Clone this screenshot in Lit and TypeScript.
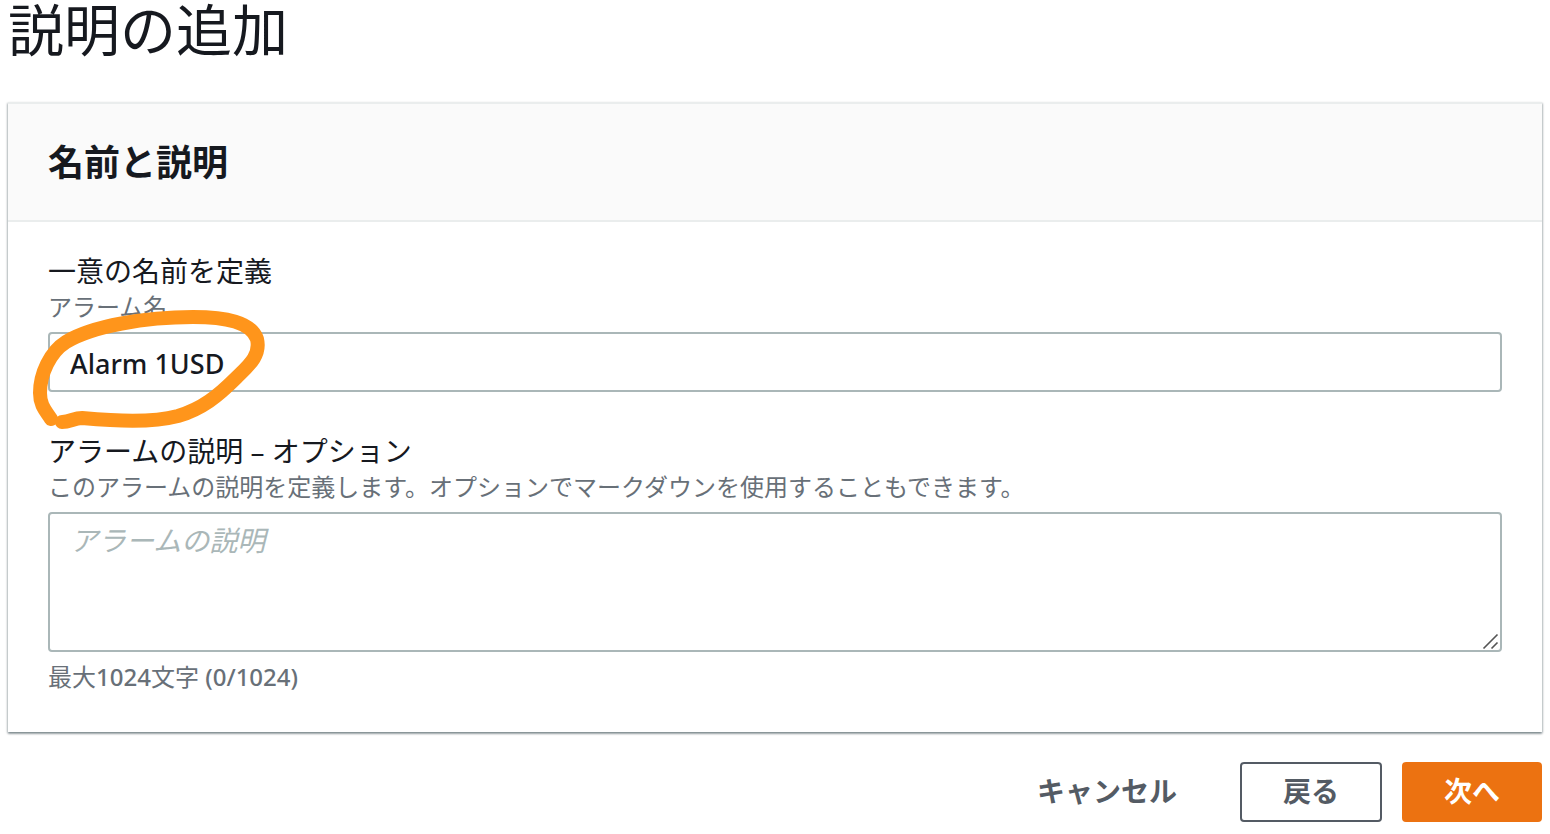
import { LitElement, html, css } from "lit";
import { customElement, state } from "lit/decorators.js";

const MAX_LENGTH = 1024;

@customElement("app-root")
export class AppRoot extends LitElement {
  static styles = css`
    :host {
      display: block;
      color: #16191f;
      font-family: "Open Sans", "Noto Sans CJK JP", sans-serif;
      font-size: 28px;
      line-height: 36px;
    }
    * {
      box-sizing: border-box;
    }
    .page {
      padding: 0 8px 12px;
    }
    .title {
      margin: 0 0 39px;
      font-family: "Liberation Sans", "Noto Sans CJK JP", sans-serif;
      font-size: 56px;
      font-weight: 400;
      line-height: 63px;
    }
    .card {
      background: #fff;
      border-top: 2px solid #eaeded;
      box-shadow: 0 2px 2px 0 rgba(0, 28, 36, 0.3), 1px 1px 2px 0 rgba(0, 28, 36, 0.2),
        -1px 1px 2px 0 rgba(0, 28, 36, 0.2);
    }
    .card-header {
      padding: 37px 40px 35px;
      background: #fafafa;
      border-bottom: 2px solid #eaeded;
    }
    .card-title {
      margin: 0;
      font-size: 36px;
      font-weight: 700;
      line-height: 44px;
    }
    .card-body {
      display: flex;
      flex-direction: column;
      gap: 41px;
      padding: 31px 40px 37px;
    }
    .label,
    .description,
    .hint {
      display: block;
    }
    .description,
    .hint {
      color: #687078;
      font-size: 24px;
    }
    .count {
      font-family: "Noto Sans", sans-serif;
      font-weight: 500;
    }
    .control {
      position: relative;
      display: flex;
      margin: 7px 0;
    }
    .field:first-child .control {
      margin-bottom: 0;
    }
    .input {
      display: block;
      width: 100%;
      margin: 0;
      padding: 8px 20px;
      border: 2px solid #aab7b8;
      border-radius: 4px;
      background: #fff;
      color: #16191f;
      font: inherit;
      outline: none;
    }
    .text {
      height: 60px;
      padding-top: 10px;
      font-family: "Noto Sans", "Noto Sans CJK JP", sans-serif;
      font-size: 27px;
      font-weight: 500;
    }
    .area {
      height: 140px;
      resize: vertical;
    }
    .area::-webkit-resizer {
      display: none;
    }
    .input:focus {
      border-color: #00a1c9;
    }
    .input::placeholder {
      color: #aab7b8;
      font-style: italic;
      opacity: 1;
    }
    .grip {
      position: absolute;
      right: 2px;
      bottom: 2px;
      width: 18px;
      height: 18px;
      pointer-events: none;
    }
    .mark {
      position: absolute;
      left: -16px;
      top: -24px;
      width: 236px;
      height: 124px;
      pointer-events: none;
    }
    .actions {
      display: flex;
      justify-content: flex-end;
      gap: 20px;
      margin-top: 30px;
    }
    .button {
      height: 60px;
      padding: 0 41px 2px;
      border: 2px solid transparent;
      border-radius: 4px;
      background: transparent;
      color: #545b64;
      font: inherit;
      font-weight: 700;
      cursor: pointer;
    }
    .normal {
      border-color: #545b64;
      background: #fff;
    }
    .primary {
      padding: 0 40px 2px;
      border-color: #ec7211;
      background: #ec7211;
      color: #fff;
    }
  `;

  @state() private name = "Alarm 1USD";
  @state() private description = "";

  render() {
    return html`
      <main class="page">
        <h1 class="title">説明の追加</h1>
        <section class="card">
          <header class="card-header">
            <h2 class="card-title">名前と説明</h2>
          </header>
          <div class="card-body">
            <div class="field">
              <label class="label" for="name">一意の名前を定義</label>
              <span class="description" id="name-help">アラーム名</span>
              <div class="control">
                <input
                  class="input text"
                  id="name"
                  type="text"
                  aria-describedby="name-help"
                  .value=${this.name}
                  @input=${(e: Event) => (this.name = (e.target as HTMLInputElement).value)}
                />
                <svg class="mark" viewBox="32 308 236 124" aria-hidden="true">
                  <path
                    d="M51 419 C46 411 40 406 40 393 C40 374 50 352 66 342 C92 326 146 317 193 317 C226 317 251 322 257 339 C261 356 248 366 236 378 C218 396 202 409 178 416 C151 423 116 421 82 418 C74 418 70 422 62 422"
                    fill="none"
                    stroke="#ff951b"
                    stroke-width="14"
                    stroke-linecap="round"
                    stroke-linejoin="round"
                  />
                </svg>
              </div>
            </div>
            <div class="field">
              <label class="label" for="description">アラームの説明 – オプション</label>
              <span class="description" id="description-help"
                >このアラームの説明を定義します。オプションでマークダウンを使用することもできます。</span
              >
              <div class="control">
                <textarea
                  class="input area"
                  id="description"
                  maxlength=${MAX_LENGTH}
                  placeholder="アラームの説明"
                  aria-describedby="description-help description-count"
                  .value=${this.description}
                  @input=${(e: Event) =>
                    (this.description = (e.target as HTMLTextAreaElement).value)}
                ></textarea>
                <svg class="grip" viewBox="0 0 18 18" aria-hidden="true">
                  <path d="M1.5 16.5 L15.5 2.5 M9.5 16.5 L15.5 10.5" stroke="#555" stroke-width="1.6" />
                </svg>
              </div>
              <span class="hint" id="description-count"
                >最大<span class="count">${MAX_LENGTH}</span>文字
                <span class="count">(${this.description.length}/${MAX_LENGTH})</span></span
              >
            </div>
          </div>
        </section>
        <div class="actions">
          <button class="button" type="button">キャンセル</button>
          <button class="button normal" type="button">戻る</button>
          <button class="button primary" type="button">次へ</button>
        </div>
      </main>
    `;
  }
}
